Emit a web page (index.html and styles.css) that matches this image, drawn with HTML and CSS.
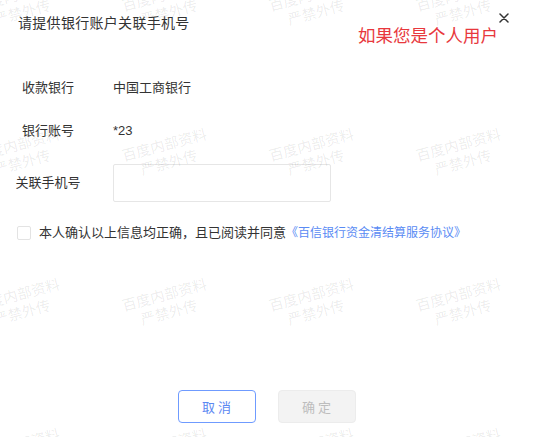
FILE: index.html
```html
<!DOCTYPE html>
<html lang="zh-CN">
<head>
<meta charset="utf-8">
<title>请提供银行账户关联手机号</title>
<link rel="stylesheet" href="styles.css">
</head>
<body>
<div class="dialog">
  <div class="header">
    <h1 class="title">请提供银行账户关联手机号</h1>
    <p class="note">如果您是个人用户</p>
    <button class="close" type="button" aria-label="关闭">
      <svg width="10" height="10" viewBox="0 0 10 10"><path d="M1 1L9 9M9 1L1 9" stroke="#333" stroke-width="1.5" stroke-linecap="round" fill="none"/></svg>
    </button>
  </div>
  <div class="form">
    <div class="row"><span class="label">收款银行</span><span class="value">中国工商银行</span></div>
    <div class="row"><span class="label">银行账号</span><span class="value">*23</span></div>
    <div class="row"><label class="label" for="phone">关联手机号</label><input id="phone" class="input" type="text"></div>
  </div>
  <label class="agree"><span class="checkbox"></span><span class="agree-text">本人确认以上信息均正确，且已阅读并同意<a class="link">《百信银行资金清结算服务协议》</a></span></label>
  <div class="footer">
    <button class="btn btn-cancel" type="button">取 消</button>
    <button class="btn btn-ok" type="button" disabled>确 定</button>
  </div>
  <div class="watermark" aria-hidden="true">
    <div class="wm"><div class="wm-text">百度内部资料<br>严禁外传</div></div>
    <div class="wm"><div class="wm-text">百度内部资料<br>严禁外传</div></div>
    <div class="wm"><div class="wm-text">百度内部资料<br>严禁外传</div></div>
    <div class="wm"><div class="wm-text">百度内部资料<br>严禁外传</div></div>
    <div class="wm"><div class="wm-text">百度内部资料<br>严禁外传</div></div>
    <div class="wm"><div class="wm-text">百度内部资料<br>严禁外传</div></div>
    <div class="wm"><div class="wm-text">百度内部资料<br>严禁外传</div></div>
    <div class="wm"><div class="wm-text">百度内部资料<br>严禁外传</div></div>
    <div class="wm"><div class="wm-text">百度内部资料<br>严禁外传</div></div>
    <div class="wm"><div class="wm-text">百度内部资料<br>严禁外传</div></div>
    <div class="wm"><div class="wm-text">百度内部资料<br>严禁外传</div></div>
    <div class="wm"><div class="wm-text">百度内部资料<br>严禁外传</div></div>
    <div class="wm"><div class="wm-text">百度内部资料<br>严禁外传</div></div>
    <div class="wm"><div class="wm-text">百度内部资料<br>严禁外传</div></div>
    <div class="wm"><div class="wm-text">百度内部资料<br>严禁外传</div></div>
    <div class="wm"><div class="wm-text">百度内部资料<br>严禁外传</div></div>
  </div>
</div>
</body>
</html>
```
FILE: styles.css
```css
* { box-sizing: border-box; }
html, body { margin: 0; padding: 0; background: #fff; }
body {
  font-family: "Liberation Sans", "Noto Sans CJK SC", sans-serif;
  color: #333;
  overflow: hidden;
}
.dialog {
  position: relative;
  width: 533px;
  height: 437px;
  overflow: hidden;
  display: flex;
  flex-direction: column;
  background: #fff;
}
.header {
  display: flex;
  align-items: flex-start;
  padding: 13px 24px 0 18px;
  height: 48px;
}
.title {
  flex: 1;
  margin: 0;
  font-size: 14px;
  font-weight: normal;
  line-height: 20px;
  letter-spacing: 0.3px;
  color: #333;
}
.note {
  margin: 11px 0 0 0;
  font-size: 17.5px;
  line-height: 24px;
  color: #e8383d;
}
.close {
  margin: 0 0 0 1px;
  padding: 0;
  width: 10px;
  height: 10px;
  border: 0;
  background: none;
  display: flex;
}
.form {
  display: flex;
  flex-direction: column;
  gap: 23px;
  margin-top: 30px;
  padding-left: 16px;
}
.row {
  display: flex;
  align-items: center;
  gap: 33px;
}
.label {
  width: 64px;
  flex: none;
  text-align: center;
  white-space: nowrap;
  font-size: 13px;
  line-height: 20px;
  color: #333;
  display: flex;
  justify-content: center;
}
.value {
  font-size: 13px;
  line-height: 20px;
  color: #333;
}
.input {
  width: 218px;
  height: 38px;
  border: 1px solid #e6e6e6;
  border-radius: 2px;
  padding: 0 10px;
  font: inherit;
  outline: none;
}
.agree {
  display: flex;
  align-items: center;
  gap: 8px;
  margin-top: 21px;
  padding-left: 17px;
  font-size: 13px;
  line-height: 20px;
}
.checkbox {
  width: 14px;
  height: 14px;
  border: 1px solid #e3e3e3;
  border-radius: 2px;
  flex: none;
  background: #fff;
}
.agree-text { color: #333; }
.link {
  color: #5a8bf4;
  font-size: 12px;
  text-decoration: none;
}
.footer {
  margin-top: auto;
  padding-bottom: 14px;
  display: flex;
  justify-content: center;
  gap: 22px;
}
.btn {
  width: 78px;
  height: 33px;
  border-radius: 4px;
  font-family: "Noto Sans CJK SC", sans-serif;
  font-size: 13px;
  padding: 0;
  background: #fff;
}
.btn-cancel {
  border: 1px solid #6f9bff;
  color: #5c88f2;
}
.btn-ok {
  border: 1px solid #ececec;
  background: #f3f3f3;
  color: #bdbdbd;
}
.watermark {
  position: absolute;
  left: -54px;
  top: -72px;
  width: 588px;
  display: flex;
  flex-wrap: wrap;
  pointer-events: none;
  z-index: 2;
}
.wm {
  width: 147px;
  height: 150px;
  display: flex;
  align-items: center;
  justify-content: center;
}
.wm-text {
  transform: rotate(-15deg);
  text-align: center;
  font-family: "Noto Sans CJK SC", sans-serif;
  font-size: 14.5px;
  line-height: 18px;
  color: rgba(0, 0, 0, 0.085);
  white-space: nowrap;
}
```
